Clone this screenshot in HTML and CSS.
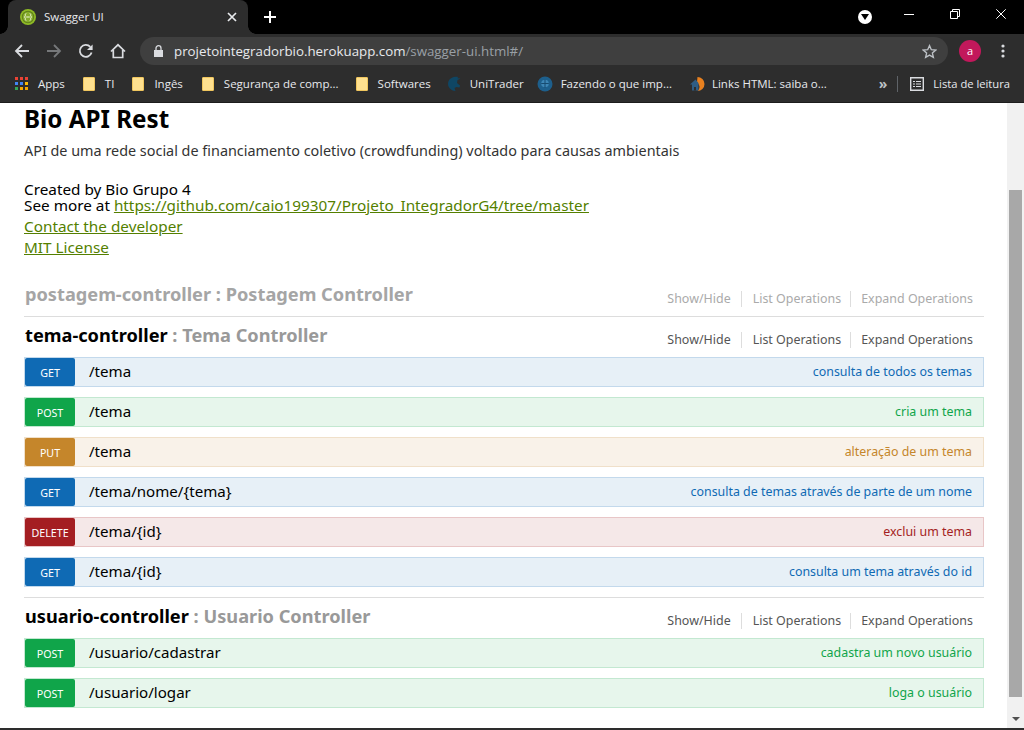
FILE: index.html
```html
<!DOCTYPE html>
<html lang="en">

<head>
    <meta charset="UTF-8">
    <meta name="viewport" content="width=device-width, initial-scale=1.0">
    <title>Swagger UI</title>
    <link rel="stylesheet" href="styles.css">
</head>

<body>
    <header class="browser">
        <div class="tabstrip">
            <div class="tab">
                <svg class="favicon" width="16" height="16" viewBox="0 0 16 16">
                    <circle cx="8" cy="8" r="8" fill="#8fbb25" />
                    <circle cx="8" cy="8" r="6.2" fill="#5f7f1c" />
                    <circle cx="8" cy="8" r="5.2" fill="#86ad2c" />
                    <path d="M6.3 4.600c-1.300 0-1 1.200-1 2.200 0 .7-.4 1.100-.9 1.200.5.1.9.5.9 1.200 0 1-.3 2.200 1 2.200M9.700 4.600c1.300 0 1 1.200 1 2.200 0 .7.4 1.100.9 1.200-.5.1-.9.5-.9 1.200 0 1 .3 2.200-1 2.200" fill="none" stroke="#eef5d8" stroke-width="1" />
                    <path d="M6.200 8h3.600" stroke="#eef5d8" stroke-width="1" />
                </svg>
                <span class="tab-title">Swagger UI</span>
                <svg class="tab-close" width="10" height="10" viewBox="0 0 10 10">
                    <path d="M1 1l8 8M9 1l-8 8" stroke="#e8eaed" stroke-width="1.700" />
                </svg>
            </div>
            <svg class="new-tab" width="14" height="14" viewBox="0 0 14 14">
                <path d="M7 1v12M1 7h12" stroke="#fff" stroke-width="2" />
            </svg>
            <div class="window-controls">
                <div class="media-badge">
                    <svg width="8" height="6" viewBox="0 0 8 6"><path d="M0 0h8L4 6z" fill="#000" /></svg>
                </div>
                <svg class="win-min" width="10" height="10" viewBox="0 0 10 10"><path d="M0 5.500h10" stroke="#fff" /></svg>
                <svg class="win-max" width="10" height="10" viewBox="0 0 10 10"><path d="M.5 2.500h7v7h-7zM2.500 2.500v-2h7v7h-2" fill="none" stroke="#fff" /></svg>
                <svg class="win-close" width="10" height="10" viewBox="0 0 10 10"><path d="M.3.300l9.400 9.400M9.700.300L.3 9.700" stroke="#fff" /></svg>
            </div>
        </div>

        <div class="toolbar">
            <svg class="nav-icon" width="16" height="16" viewBox="0 0 16 16"><path d="M15 8H2M8 2L2 8l6 6" fill="none" stroke="#dadce0" stroke-width="1.800" /></svg>
            <svg class="nav-icon" width="16" height="16" viewBox="0 0 16 16"><path d="M1 8h13M8 2l6 6-6 6" fill="none" stroke="#76787a" stroke-width="1.800" /></svg>
            <svg class="nav-icon" width="16" height="16" viewBox="0 0 16 16"><path d="M13.600 9.600A6 6 0 1 1 12.300 3.800" fill="none" stroke="#dadce0" stroke-width="1.800" /><path d="M14.600 1.500v5.600H9z" fill="#dadce0" /></svg>
            <svg class="nav-icon" width="16" height="16" viewBox="0 0 16 16"><path d="M1 8.500L8 1.800l7 6.700M3.300 7v7.500h9.400V7" fill="none" stroke="#dadce0" stroke-width="1.700" /></svg>
            <div class="omnibox">
                <svg class="lock" width="9" height="12" viewBox="0 0 9 12"><path d="M0 5h9v7H0z" fill="#dadce0" /><path d="M2 5V3.200a2.500 2.500 0 0 1 5 0V5" fill="none" stroke="#dadce0" stroke-width="1.300" /></svg>
                <span class="url">projetointegradorbio.herokuapp.com<span class="url-path">/swagger-ui.html#/</span></span>
                <svg class="star" width="15" height="15" viewBox="0 0 24 24"><path d="M12 2.600l2.900 6.500 7.100.7-5.400 4.700 1.600 7-6.200-3.700-6.200 3.700 1.600-7L2 9.800l7.100-.7z" fill="none" stroke="#bdc1c6" stroke-width="2.200" /></svg>
            </div>
            <div class="avatar">a</div>
            <svg class="menu-dots" width="4" height="14" viewBox="0 0 4 14"><circle cx="2" cy="2" r="1.600" fill="#dadce0" /><circle cx="2" cy="7" r="1.600" fill="#dadce0" /><circle cx="2" cy="12" r="1.600" fill="#dadce0" /></svg>
        </div>

        <div class="bookmarks">
            <div class="bookmark">
                <svg class="apps-icon" width="13" height="13" viewBox="0 0 13 13">
                    <path d="M0 0h3v3H0zM5 0h3v3H5zM10 0h3v3h-3z" fill="#ea4335" />
                    <path d="M0 5h3v3H0zM5 5h3v3H5z" fill="#4285f4" /><path d="M10 5h3v3h-3z" fill="#fbbc05" />
                    <path d="M0 10h3v3H0z" fill="#34a853" /><path d="M5 10h3v3H5zM10 10h3v3h-3z" fill="#f5a800" />
                </svg>
                <span>Apps</span>
            </div>
            <div class="bookmark bm-ti"><span class="folder"></span><span>TI</span></div>
            <div class="bookmark bm-ingles"><span class="folder"></span><span>Ingês</span></div>
            <div class="bookmark bm-seg"><span class="folder"></span><span>Segurança de comp...</span></div>
            <div class="bookmark bm-soft"><span class="folder"></span><span>Softwares</span></div>
            <div class="bookmark bm-uni">
                <svg width="16" height="16" viewBox="0 0 16 16"><path d="M12 1C10 .6 6 1 4 3 1.500 5.500 1.500 9.500 3.500 12c1.500 2 3.500 3 6 3l-1-3 2-1 3 .5.500-2-3-2.500.5-3 3-1.500-3-.2z" fill="#0f4664" /></svg>
                <span>UniTrader</span>
            </div>
            <div class="bookmark bm-faz">
                <svg width="16" height="16" viewBox="0 0 16 16"><circle cx="8" cy="8" r="7.500" fill="#1d5f8c" /><circle cx="8" cy="7.500" r="3.800" fill="#3d86b5" /><path d="M8 3.500v8.500M4.200 7.500h7.600" stroke="#174b70" /></svg>
                <span>Fazendo o que imp...</span>
            </div>
            <div class="bookmark bm-links">
                <svg width="16" height="16" viewBox="0 0 16 16"><path d="M8.500 1a7 7 0 0 1 0 14c2-2 2.500-4 1.500-6L8 6z" fill="#e8801f" /><path d="M1 8.500l5.500-5 3 3.500v7.500H3V8.500z" fill="#2f5d84" /><path d="M5 11h2v3.500H5z" fill="#2d2d2d" /></svg>
                <span>Links HTML: saiba o...</span>
            </div>
            <span class="more">»</span>
            <span class="bm-sep"></span>
            <div class="bookmark bm-read">
                <svg width="14" height="14" viewBox="0 0 14 14"><path d="M.7.700h12.600v12.600H.7z" fill="none" stroke="#dadce0" stroke-width="1.400" /><path d="M3 4h2v1H3zM6 4h5v1H6zM3 6.500h2v1H3zM6 6.500h5v1H6zM3 9h2v1H3zM6 9h5v1H6z" fill="#dadce0" /></svg>
                <span>Lista de leitura</span>
            </div>
        </div>
    </header>

    <div class="viewport">
        <main class="page">
            <h1 class="api-title">Bio API Rest</h1>
            <p class="api-desc">API de uma rede social de financiamento coletivo (crowdfunding) voltado para causas ambientais</p>
            <div class="api-info">
                <div>Created by Bio Grupo 4</div>
                <div>See more at <a href="#">https://github.com/caio199307/Projeto_IntegradorG4/tree/master</a></div>
            </div>
            <div class="api-link"><a href="#">Contact the developer</a></div>
            <div class="api-link"><a href="#">MIT License</a></div>

            <section class="resource dimmed first">
                <div class="resource-head">
                    <h2><span class="res-name">postagem-controller</span> : Postagem Controller</h2>
                    <ul class="res-actions">
                        <li>Show/Hide</li>
                        <li>List Operations</li>
                        <li>Expand Operations</li>
                    </ul>
                </div>
            </section>

            <section class="resource">
                <div class="resource-head">
                    <h2><span class="res-name">tema-controller</span> : Tema Controller</h2>
                    <ul class="res-actions">
                        <li>Show/Hide</li>
                        <li>List Operations</li>
                        <li>Expand Operations</li>
                    </ul>
                </div>
                <div class="op get"><span class="verb">GET</span><span class="op-path">/tema</span><span class="op-sum">consulta de todos os temas</span></div>
                <div class="op post"><span class="verb">POST</span><span class="op-path">/tema</span><span class="op-sum">cria um tema</span></div>
                <div class="op put"><span class="verb">PUT</span><span class="op-path">/tema</span><span class="op-sum">alteração de um tema</span></div>
                <div class="op get"><span class="verb">GET</span><span class="op-path">/tema/nome/{tema}</span><span class="op-sum">consulta de temas através de parte de um nome</span></div>
                <div class="op delete"><span class="verb">DELETE</span><span class="op-path">/tema/{id}</span><span class="op-sum">exclui um tema</span></div>
                <div class="op get"><span class="verb">GET</span><span class="op-path">/tema/{id}</span><span class="op-sum">consulta um tema através do id</span></div>
            </section>

            <section class="resource last">
                <div class="resource-head">
                    <h2><span class="res-name">usuario-controller</span> : Usuario Controller</h2>
                    <ul class="res-actions">
                        <li>Show/Hide</li>
                        <li>List Operations</li>
                        <li>Expand Operations</li>
                    </ul>
                </div>
                <div class="op post"><span class="verb">POST</span><span class="op-path">/usuario/cadastrar</span><span class="op-sum">cadastra um novo usuário</span></div>
                <div class="op post"><span class="verb">POST</span><span class="op-path">/usuario/logar</span><span class="op-sum">loga o usuário</span></div>
            </section>
        </main>

        <aside class="scrollbar">
            <span class="sb-thumb"></span>
            <span class="sb-arrow"></span>
        </aside>
    </div>
    <div class="taskbar-edge"></div>
</body>

</html>
```
FILE: styles.css
```css
* {
    box-sizing: border-box;
}

html,
body {
    height: 730px;
    overflow: hidden;
}

body {
    margin: 0;
    display: flex;
    flex-direction: column;
    font-family: "Noto Sans", "Open Sans", sans-serif;
    background-color: #fff;
}

/* browser window */
.browser {
    flex: none;
    color: #e8eaed;
    font-family: "Open Sans", "Noto Sans", sans-serif;
    font-size: 11.5px;
}

.tabstrip {
    height: 34px;
    background-color: #000;
    display: flex;
    align-items: center;
    padding-left: 8px;
}

.tab {
    position: relative;
    width: 240px;
    height: 34px;
    background-color: #2d2d2d;
    border-radius: 8px 8px 0 0;
    display: flex;
    align-items: center;
    padding: 0 11px 0 12px;
}

/* little curves at the foot of the tab */
.tab::before,
.tab::after {
    content: "";
    position: absolute;
    bottom: 0;
    width: 8px;
    height: 8px;
}

.tab::before {
    left: -8px;
    background: radial-gradient(circle at 0 0, #000 7.5px, #2d2d2d 8px);
}

.tab::after {
    right: -8px;
    background: radial-gradient(circle at 100% 0, #000 7.5px, #2d2d2d 8px);
}

.favicon {
    flex: none;
}

.tab-title {
    margin: 0 0 2px 8px;
    flex: 1;
}

.new-tab {
    margin-left: 15px;
}

.window-controls {
    margin-left: auto;
    display: flex;
    align-items: center;
    padding-right: 18px;
}

.media-badge {
    width: 14px;
    height: 14px;
    border-radius: 50%;
    background-color: #fff;
    display: flex;
    align-items: center;
    justify-content: center;
}

.win-min {
    margin-left: 32px;
    margin-bottom: 6px;
}

.win-max {
    margin-left: 36px;
    margin-bottom: 6px;
}

.win-close {
    margin-left: 36px;
    margin-bottom: 6px;
}

.toolbar {
    height: 34px;
    background-color: #2d2d2d;
    display: flex;
    align-items: center;
    padding-left: 14px;
}

.nav-icon {
    flex: none;
    margin-right: 16px;
}

.omnibox {
    width: 808px;
    height: 28px;
    margin-left: -2px;
    border-radius: 14px;
    background-color: #3f3f3f;
    display: flex;
    align-items: center;
    padding: 0 11px 0 14px;
}

.url {
    margin-left: 11px;
    font-size: 13.3px;
    color: #e8eaed;
    flex: 1;
}

.url-path {
    color: #9aa0a6;
}

.avatar {
    flex: none;
    width: 22px;
    height: 22px;
    margin-left: 11px;
    border-radius: 50%;
    background-color: #c2185b;
    color: #fff;
    font-size: 11px;
    line-height: 21px;
    text-align: center;
}

.menu-dots {
    flex: none;
    margin-left: 20px;
}

.bookmarks {
    height: 35px;
    background-color: #2d2d2d;
    border-bottom: 1px solid #1d1d1d;
    display: flex;
    align-items: center;
    padding: 0 0 3px 15px;
    color: #e8eaed;
}

.bookmark {
    display: flex;
    align-items: center;
    white-space: nowrap;
}

.bookmark svg {
    flex: none;
}

.bookmark svg + span {
    margin-left: 8px;
}

.bookmark .apps-icon + span,
.folder + span {
    margin-left: 10px;
}

.folder {
    width: 12px;
    height: 14px;
    background-color: #fee08f;
    border: 1px solid #f0c65e;
    border-radius: 1px;
    flex: none;
}

.bm-ti { margin-left: 18px; }
.bm-ingles { margin-left: 18px; }
.bm-seg { margin-left: 19px; }
.bm-soft { margin-left: 17px; }
.bm-uni { margin-left: 15px; }
.bm-faz { margin-left: 13px; }
.bm-links { margin-left: 17px; }
.bm-links svg + span { margin-left: 7px; }

.more {
    margin-left: auto;
    font-size: 14px;
    font-weight: bold;
    color: #bdc1c6;
}

.bm-sep {
    width: 1px;
    height: 16px;
    margin-left: 10px;
    background-color: #5f6368;
}

.bm-read {
    margin-left: 12px;
    margin-right: 14px;
    font-size: 11.2px;
}

.bm-read svg + span {
    margin-left: 9px;
}

/* page + scrollbar */
.viewport {
    flex: 1;
    min-height: 0;
    display: flex;
    overflow: hidden;
}

.page {
    flex: 1;
    padding: 0 23px 0 24px;
    overflow: hidden;
}

.api-title {
    margin: 0;
    font-size: 24.2px;
    line-height: 31px;
    font-weight: bold;
    color: #000;
}

.api-desc {
    margin: 7px 0 0;
    font-size: 14.4px;
    line-height: 20px;
    color: #333;
}

.api-info {
    margin-top: 20px;
    font-size: 15.3px;
    line-height: 16px;
    color: #000;
}

.api-link {
    margin-top: 5px;
    font-size: 15.3px;
    line-height: 16px;
}

.api-info a,
.api-link a {
    color: #547f00;
}

.resource {
    border-bottom: 1px solid #ddd;
}

.resource.first {
    margin-top: 21px;
}

.resource.last {
    border-bottom: none;
}

.resource-head {
    height: 40px;
    display: flex;
    align-items: center;
    justify-content: space-between;
    padding-right: 11px;
}

.resource-head h2 {
    margin: 0 0 4px 1px;
    font-size: 18.2px;
    font-weight: bold;
    color: #999;
}

.res-name {
    color: #000;
}

.dimmed .resource-head h2,
.dimmed .res-name {
    color: #a5a5a5;
}

.res-actions {
    list-style: none;
    margin: 6px 0 0;
    padding: 0;
    display: flex;
    font-size: 12.45px;
    color: #555;
}

.res-actions li {
    padding: 0 9px 0 11px;
    line-height: 16px;
    border-left: 1px solid #ddd;
}

.res-actions li:first-child {
    padding-right: 10px;
    border-left: none;
}

.res-actions li:last-child {
    padding: 0 0 0 10px;
}

.dimmed .res-actions {
    color: #aaa;
}

.op {
    height: 30px;
    margin-bottom: 10px;
    border: 1px solid;
    display: flex;
    align-items: center;
    padding-right: 11px;
}

.verb {
    flex: none;
    width: 50px;
    height: 28px;
    border-radius: 2px;
    color: #fff;
    font-size: 10.7px;
    line-height: 30px;
    text-align: center;
}

.op-path {
    margin: 0 0 2px 14px;
    font-size: 15.1px;
    color: #000;
}

.op-sum {
    margin: 0 0 2px auto;
    font-size: 12.4px;
}

.get { background-color: #e7f0f7; border-color: #c3d9ec; }
.get .verb { background-color: #0f6ab4; }
.get .op-sum { color: #0f6ab4; }

.post { background-color: #e7f6ec; border-color: #c3e8d1; }
.post .verb { background-color: #10a54a; }
.post .op-sum { color: #10a54a; }

.put { background-color: #f9f2e9; border-color: #f0e0ca; }
.put .verb { background-color: #c5862b; }
.put .op-sum { color: #c5862b; }

.delete { background-color: #f5e8e8; border-color: #e8c6c7; }
.delete .verb { background-color: #a41e22; }
.delete .op-sum { color: #a41e22; }

.scrollbar {
    flex: none;
    width: 17px;
    background-color: #f1f1f1;
    display: flex;
    flex-direction: column;
    align-items: center;
}

.sb-thumb {
    width: 13px;
    height: 507px;
    margin-top: 87px;
    background-color: #a8a8a8;
}

.sb-arrow {
    margin-top: 20px;
    border-left: 4px solid transparent;
    border-right: 4px solid transparent;
    border-top: 4px solid #505050;
}

.taskbar-edge {
    flex: none;
    height: 2px;
    background-color: #2d2d2d;
}
```
